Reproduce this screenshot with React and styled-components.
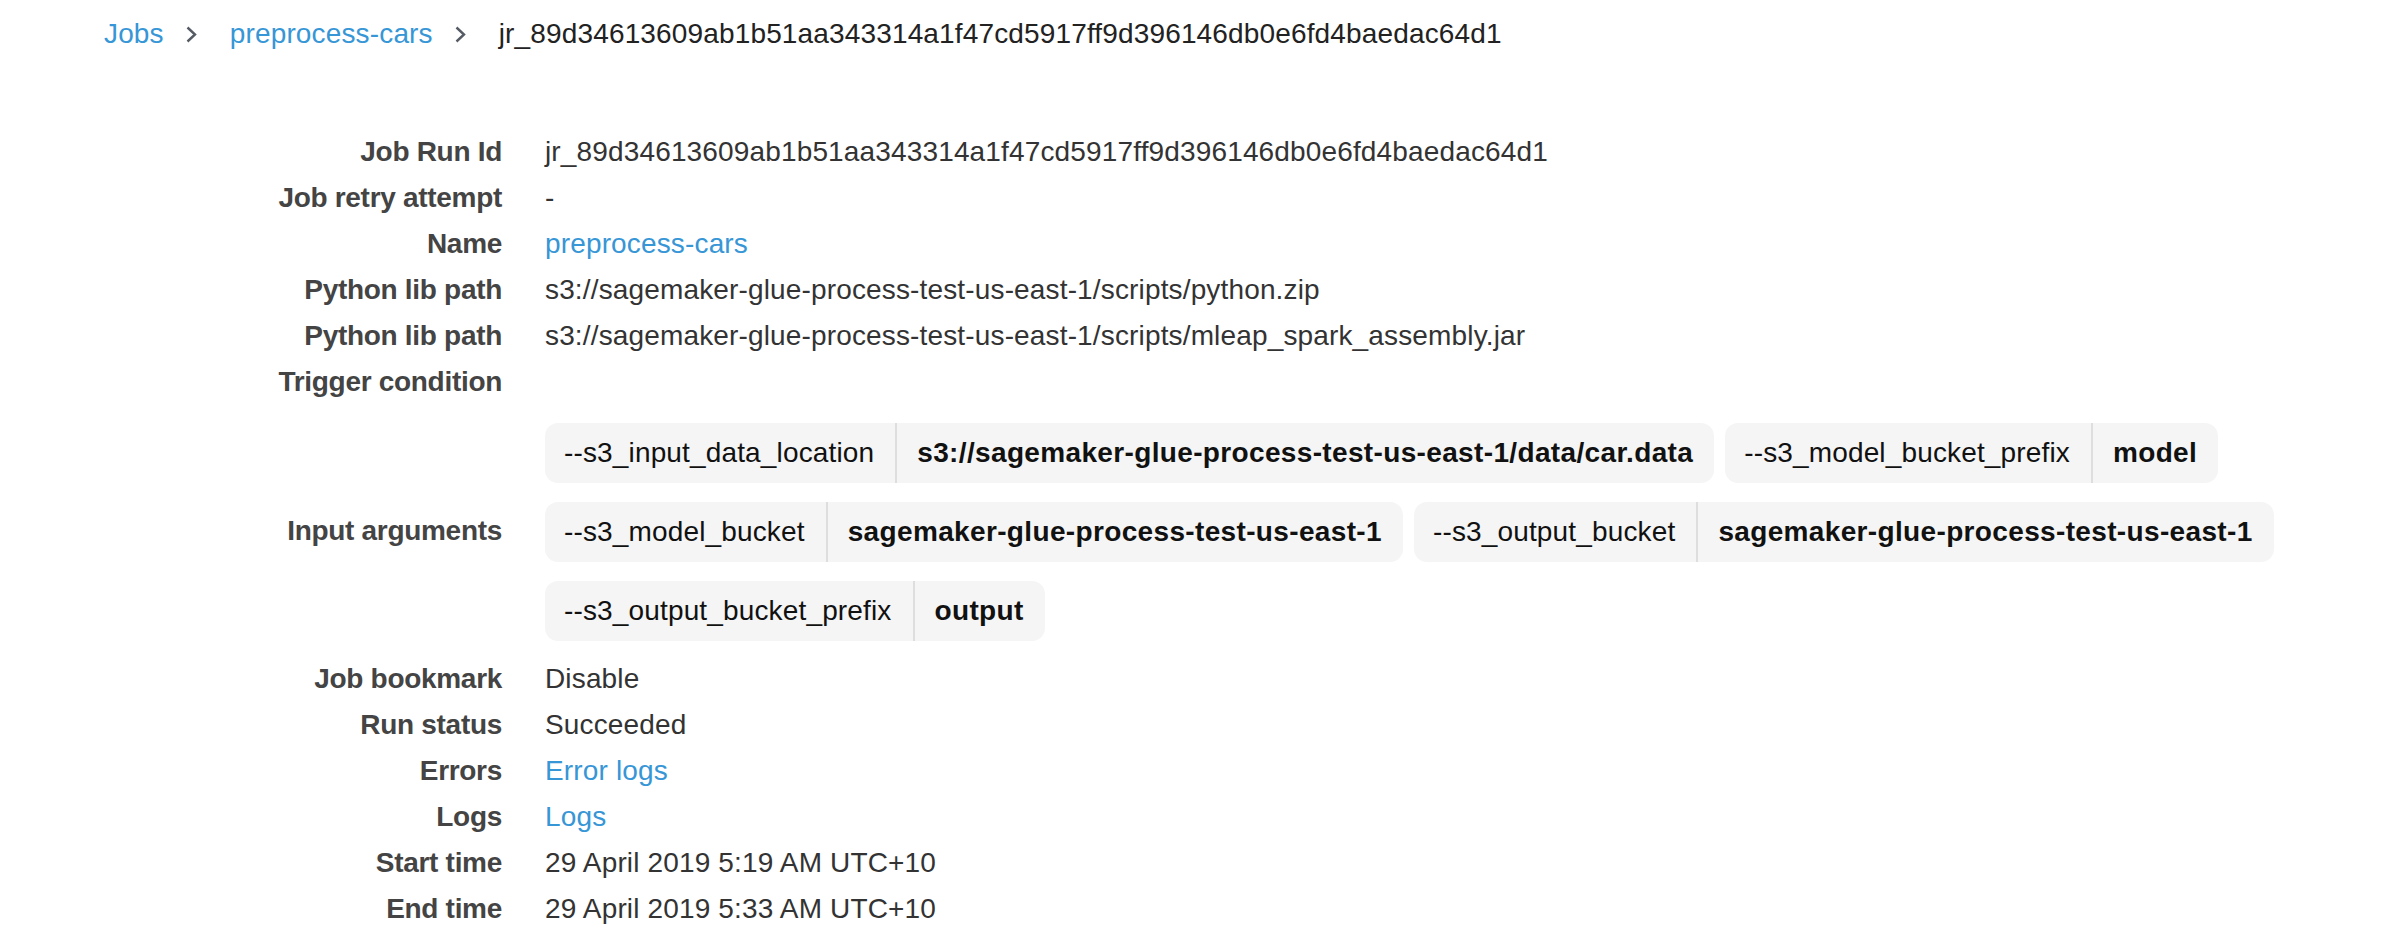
import React from 'react'
import styled, { createGlobalStyle } from 'styled-components'

const GlobalStyle = createGlobalStyle`
  body {
    margin: 0;
    background: #fff;
    font-family: "Liberation Sans", Arial, Helvetica, sans-serif;
    font-size: 28px;
    letter-spacing: 0.15px;
    color: #333;
  }
`

const Page = styled.div`
  padding-top: 14px;
`

const Breadcrumbs = styled.nav`
  display: flex;
  align-items: center;
  height: 40px;
  padding-left: 104px;
  line-height: 40px;
`

const Crumb = styled.a`
  color: ${(p) => (p.current ? '#222' : '#3796d6')};
  text-decoration: none;
  white-space: nowrap;
`

const Chevron = styled.svg`
  width: 11px;
  height: 17px;
  margin: 0 33px 0 22px;
  flex: none;
`

const Details = styled.dl`
  display: grid;
  grid-template-columns: 502px 1fr;
  column-gap: 43px;
  margin: 75px 0 0;
`

const Label = styled.dt`
  grid-column: 1;
  display: flex;
  align-items: center;
  justify-content: flex-end;
  min-height: 46px;
  font-weight: bold;
  letter-spacing: -0.3px;
  color: #444;
  white-space: nowrap;
`

const Value = styled.dd`
  grid-column: 2;
  display: flex;
  align-items: center;
  min-height: 46px;
  margin: 0;
  color: #333;
  white-space: nowrap;
`

const Link = styled.a`
  color: #3796d6;
  text-decoration: none;
`

const ChipList = styled.div`
  display: flex;
  flex-wrap: wrap;
  column-gap: 11px;
  row-gap: 19px;
  padding: 18px 40px 15px 0;
`

const Chip = styled.div`
  display: flex;
  align-items: stretch;
  height: 60px;
  background: #f5f5f5;
  border-radius: 13px;
  overflow: hidden;
`

const ChipPart = styled.span`
  display: flex;
  align-items: center;
  padding: 0 21px 0 ${(p) => (p.value ? '20px' : '19px')};
  color: #111;
  font-weight: ${(p) => (p.value ? 'bold' : 'normal')};
  letter-spacing: ${(p) => (p.value ? '0.35px' : '0.15px')};
  border-left: ${(p) => (p.value ? '2px solid #dedede' : 'none')};
  white-space: nowrap;
`

const runId = 'jr_89d34613609ab1b51aa343314a1f47cd5917ff9d396146db0e6fd4baedac64d1'

const args = [
  ['--s3_input_data_location', 's3://sagemaker-glue-process-test-us-east-1/data/car.data'],
  ['--s3_model_bucket_prefix', 'model'],
  ['--s3_model_bucket', 'sagemaker-glue-process-test-us-east-1'],
  ['--s3_output_bucket', 'sagemaker-glue-process-test-us-east-1'],
  ['--s3_output_bucket_prefix', 'output'],
]

const ChevronIcon = () => (
  <Chevron viewBox="0 0 11 17">
    <path d="M1.5 1.5 L9 8.5 L1.5 15.5" fill="none" stroke="#545b64" strokeWidth="2.4" />
  </Chevron>
)

export default function App() {
  return (
    <Page>
      <GlobalStyle />
      <Breadcrumbs>
        <Crumb href="#">Jobs</Crumb>
        <ChevronIcon />
        <Crumb href="#">preprocess-cars</Crumb>
        <ChevronIcon />
        <Crumb current>{runId}</Crumb>
      </Breadcrumbs>

      <Details>
        <Label>Job Run Id</Label>
        <Value>{runId}</Value>
        <Label>Job retry attempt</Label>
        <Value>-</Value>
        <Label>Name</Label>
        <Value>
          <Link href="#">preprocess-cars</Link>
        </Value>
        <Label>Python lib path</Label>
        <Value>s3://sagemaker-glue-process-test-us-east-1/scripts/python.zip</Value>
        <Label>Python lib path</Label>
        <Value>s3://sagemaker-glue-process-test-us-east-1/scripts/mleap_spark_assembly.jar</Value>
        <Label>Trigger condition</Label>
        <Value />
        <Label>Input arguments</Label>
        <Value>
          <ChipList>
            {args.map(([key, val]) => (
              <Chip key={key}>
                <ChipPart>{key}</ChipPart>
                <ChipPart value>{val}</ChipPart>
              </Chip>
            ))}
          </ChipList>
        </Value>
        <Label>Job bookmark</Label>
        <Value>Disable</Value>
        <Label>Run status</Label>
        <Value>Succeeded</Value>
        <Label>Errors</Label>
        <Value>
          <Link href="#">Error logs</Link>
        </Value>
        <Label>Logs</Label>
        <Value>
          <Link href="#">Logs</Link>
        </Value>
        <Label>Start time</Label>
        <Value>29 April 2019 5:19 AM UTC+10</Value>
        <Label>End time</Label>
        <Value>29 April 2019 5:33 AM UTC+10</Value>
      </Details>
    </Page>
  )
}
